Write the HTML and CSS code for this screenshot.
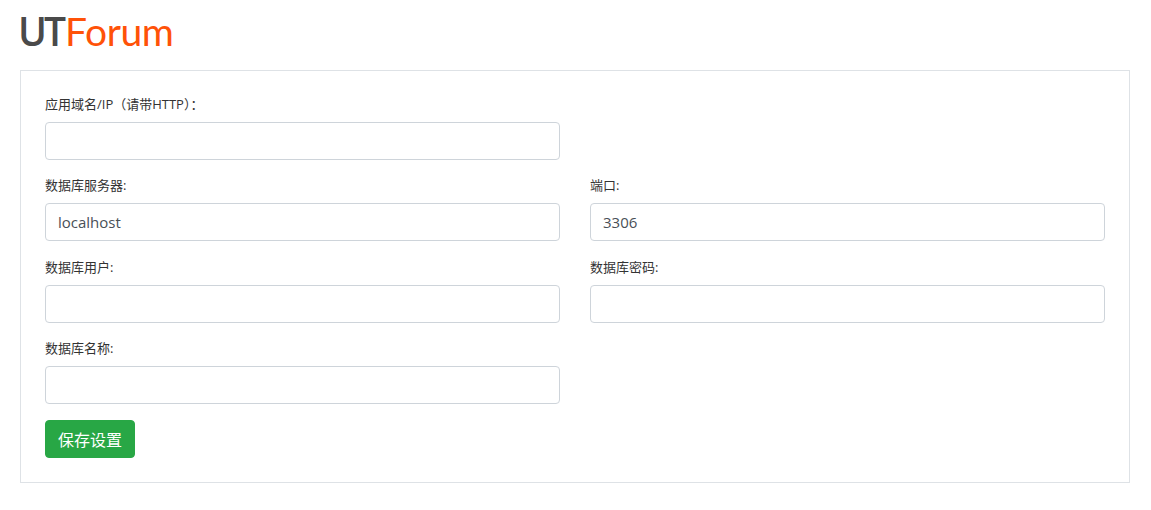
FILE: index.html
```html
<!DOCTYPE html>
<html lang="zh-CN">
<head>
    <meta charset="UTF-8">
    <meta name="viewport" content="width=device-width, initial-scale=1.0">
    <title>UTForum</title>
    <link rel="stylesheet" href="styles.css">
</head>
<body>
    <div class="logo"><span class="logo-ut">UT</span><span class="logo-forum">Forum</span></div>

    <form class="card">
        <div class="form-row">
            <div class="form-group">
                <label for="host">应用域名/IP（请带HTTP）：</label>
                <input class="form-control" id="host" type="text">
            </div>
        </div>
        <div class="form-row">
            <div class="form-group">
                <label for="server">数据库服务器:</label>
                <input class="form-control" id="server" type="text" value="localhost">
            </div>
            <div class="form-group">
                <label for="port">端口:</label>
                <input class="form-control" id="port" type="text" value="3306">
            </div>
        </div>
        <div class="form-row">
            <div class="form-group">
                <label for="user">数据库用户:</label>
                <input class="form-control" id="user" type="text">
            </div>
            <div class="form-group">
                <label for="password">数据库密码:</label>
                <input class="form-control" id="password" type="password">
            </div>
        </div>
        <div class="form-row">
            <div class="form-group">
                <label for="dbname">数据库名称:</label>
                <input class="form-control" id="dbname" type="text">
            </div>
        </div>
        <button class="btn-save" type="button">保存设置</button>
    </form>
</body>
</html>
```

FILE: styles.css
```css
body {
    font-family: "Open Sans", "Noto Sans CJK SC", sans-serif;
    margin: 0;
    padding: 0 21px 0 20px;
    background-color: #fff;
    color: #333;
}

.logo {
    height: 70px;
    box-sizing: border-box;
    padding-top: 5px;
    font-family: Lato, sans-serif;
    font-size: 39px;
    line-height: 52px;
    white-space: nowrap;
}

.logo-ut {
    font-family: "Open Sans", sans-serif;
    color: #4a4a4a;
    font-weight: 600;
    letter-spacing: -3px;
    margin-left: -2px;
}

.logo-forum {
    color: #ff5208;
    margin-left: 2px;
    letter-spacing: -0.4px;
}

.card {
    border: 1px solid #dee2e6;
    padding: 23.1px 24px 24px;
}

.form-row {
    display: grid;
    grid-template-columns: 1fr 1fr;
    gap: 30px;
}

.form-group {
    margin-bottom: 16px;
}

.form-group label {
    display: block;
    padding-top: 1.6px;
    font-size: 13px;
    line-height: 17.9px;
    margin-bottom: 8px;
    color: #333;
}

.form-control {
    display: block;
    box-sizing: border-box;
    width: 100%;
    height: 38px;
    padding: 6px 12px;
    font-family: "Open Sans", sans-serif;
    font-size: 15px;
    color: #495057;
    background: #fff;
    border: 1px solid #ced4da;
    border-radius: 4px;
}

.btn-save {
    display: block;
    height: 38px;
    padding: 0 12px;
    font-family: "Noto Sans CJK SC", sans-serif;
    font-size: 16px;
    color: #fff;
    background-color: #28a745;
    border: 1px solid #28a745;
    border-radius: 4px;
    cursor: pointer;
}
```
